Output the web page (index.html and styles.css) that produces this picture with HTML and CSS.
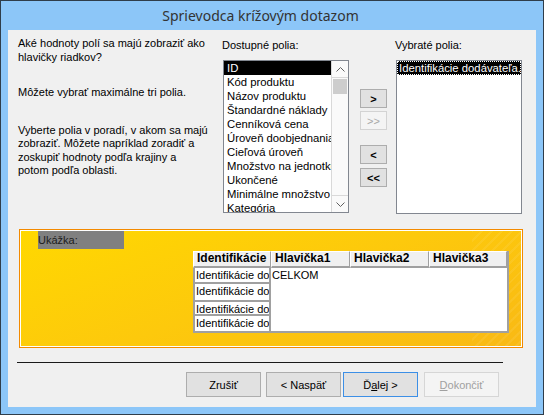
FILE: index.html
```html
<!DOCTYPE html>
<html lang="sk">
<head>
    <meta charset="UTF-8">
    <title>Sprievodca krížovým dotazom</title>
    <link rel="stylesheet" href="styles.css">
</head>
<body>
    <div class="window">
        <div class="titlebar">Sprievodca krížovým dotazom</div>
        <div class="client">
            <div class="top">
                <div class="intro">
                    <p class="q">Aké hodnoty polí sa majú zobraziť ako<br>hlavičky riadkov?</p>
                    <p class="max">Môžete vybrať maximálne tri polia.</p>
                    <p>Vyberte polia v poradí, v akom sa majú<br>zobraziť. Môžete napríklad zoradiť a<br>zoskupiť hodnoty podľa krajiny a<br>potom podľa oblasti.</p>
                </div>

                <div class="field-col">
                    <div class="label">Dostupné polia:</div>
                    <div class="listbox">
                        <ul class="items">
                            <li class="selected">ID</li>
                            <li>Kód produktu</li>
                            <li>Názov produktu</li>
                            <li>Štandardné náklady</li>
                            <li>Cenníková cena</li>
                            <li>Úroveň doobjednania</li>
                            <li>Cieľová úroveň</li>
                            <li>Množstvo na jednotku</li>
                            <li>Ukončené</li>
                            <li>Minimálne množstvo na objednanie</li>
                            <li>Kategória</li>
                        </ul>
                        <div class="scrollbar">
                            <div class="sb-btn sb-up">
                                <svg width="9" height="5" viewBox="0 0 9 5"><polyline points="0.5,4.5 4.5,0.5 8.5,4.5" fill="none" stroke="#606060" stroke-width="1"/></svg>
                            </div>
                            <div class="sb-thumb"></div>
                            <div class="sb-track"></div>
                            <div class="sb-btn sb-down">
                                <svg width="9" height="5" viewBox="0 0 9 5"><polyline points="0.5,0.5 4.5,4.5 8.5,0.5" fill="none" stroke="#606060" stroke-width="1"/></svg>
                            </div>
                        </div>
                    </div>
                </div>

                <div class="move-buttons">
                    <button class="move add-one">&gt;</button>
                    <button class="move add-all" disabled>&gt;&gt;</button>
                    <button class="move remove-one">&lt;</button>
                    <button class="move remove-all">&lt;&lt;</button>
                </div>

                <div class="field-col selected-col">
                    <div class="label">Vybraté polia:</div>
                    <div class="listbox">
                        <ul class="items">
                            <li class="selected focused">Identifikácie dodávateľa.ID</li>
                        </ul>
                    </div>
                </div>
            </div>

            <div class="preview">
                <div class="preview-label">Ukážka:</div>
                <div class="sheet">
                    <div class="head">Identifikácie</div>
                    <div class="head">Hlavička1</div>
                    <div class="head">Hlavička2</div>
                    <div class="head">Hlavička3</div>
                    <div class="row-cell r1">Identifikácie dodávateľa1</div>
                    <div class="values">CELKOM</div>
                    <div class="row-cell r2">Identifikácie dodávateľa1</div>
                    <div class="row-cell r3">Identifikácie dodávateľa2</div>
                    <div class="row-cell r4">Identifikácie dodávateľa2</div>
                </div>
            </div>

            <hr class="separator">

            <div class="actions">
                <button class="btn">Zrušiť</button>
                <button class="btn back">&lt; Naspäť</button>
                <button class="btn next default">Ď<u>a</u>lej &gt;</button>
                <button class="btn finish" disabled><u>D</u>okončiť</button>
            </div>
        </div>
    </div>
</body>
</html>
```

FILE: styles.css
```css
body {
    margin: 0;
    font-family: "Liberation Sans", Arial, sans-serif;
    font-size: 11px;
    color: #000;
}
.window {
    width: 544px;
    height: 415px;
    box-sizing: border-box;
    border: 1px solid #2f3d4a;
    background-color: #8cc6f8;
    display: flex;
    flex-direction: column;
}
.titlebar {
    height: 29px;
    display: flex;
    align-items: center;
    justify-content: center;
    padding-right: 23px;
    font-family: "Noto Sans", "Open Sans", sans-serif;
    font-size: 14px;
    color: #333;
}
.client {
    margin: 0 7px;
    height: 377px;
    background-color: #f0f0f0;
}

/* Upper part: text, field lists, move buttons */
.top {
    display: flex;
    height: 184px;
    box-sizing: border-box;
    padding: 8px 0 0 10px;
}
.intro {
    width: 204px;
    line-height: 13.5px;
    margin-top: -1px;
}
.intro p {
    margin: 0;
}
.intro .q {
    margin-bottom: 22px;
}
.intro .max {
    margin-bottom: 24px;
}
.field-col {
    width: 127px;
}
.label {
    height: 14px;
    line-height: 14px;
    margin-bottom: 8px;
}
.listbox {
    margin-left: 1px;
    width: 126px;
    height: 153px;
    box-sizing: border-box;
    border: 1px solid #828790;
    background-color: #fff;
    display: flex;
    overflow: hidden;
}
.selected-col .listbox {
    height: 154px;
}
.items {
    list-style: none;
    margin: 0;
    padding: 0;
    flex: 1;
    min-width: 0;
}
.items li {
    height: 14px;
    line-height: 14px;
    padding-left: 3px;
    font-size: 11.3px;
    white-space: nowrap;
    overflow: hidden;
}
.items li.selected {
    background-color: #000;
    color: #fff;
}
.items li.focused {
    padding-left: 2px;
    outline: 1px dotted #fff;
    outline-offset: -1px;
}
.scrollbar {
    width: 16px;
    display: flex;
    flex-direction: column;
    border-left: 1px solid #d9d9d9;
    background-color: #fafafa;
}
.sb-btn {
    height: 16px;
    display: flex;
    align-items: center;
    justify-content: center;
}
.sb-up {
    border-bottom: 1px solid #d9d9d9;
}
.sb-down {
    border-top: 1px solid #d9d9d9;
}
.sb-thumb {
    height: 15px;
    margin: 1px 1px 0;
    background-color: #cdcdcd;
}
.sb-track {
    flex: 1;
}

.move-buttons {
    width: 27px;
    margin-left: 11px;
    padding-top: 51px;
}
.move {
    display: block;
    width: 27px;
    height: 19px;
    padding: 0;
    border: 1px solid #adadad;
    background-color: #e1e1e1;
    font-family: "Liberation Sans", Arial, sans-serif;
    font-size: 11px;
    font-weight: bold;
    color: #000;
}
.move.add-all {
    margin-top: 3px;
    border-color: #d3d3d3;
    background-color: #f4f4f4;
    color: #a8a8a8;
    font-weight: normal;
}
.move.remove-one {
    margin-top: 15px;
}
.move.remove-all {
    margin-top: 4px;
}
.selected-col {
    margin-left: 8px;
}

/* Preview */
.preview {
    margin: 15px 0 0 11px;
    width: 504px;
    height: 119px;
    box-sizing: border-box;
    padding-top: 1px;
    border: 1px solid #f38a00;
    box-shadow: inset 0 0 0 1px #fff;
    background:
        repeating-linear-gradient(135deg, rgba(255, 255, 255, 0.07) 0 2px, transparent 2px 7px) right top / 50px 100% no-repeat,
        linear-gradient(160deg, #ffd800 0%, #fdc90c 50%, #f9b914 100%);
}
.preview-label {
    margin-left: 18px;
    width: 86px;
    height: 18px;
    line-height: 18px;
    background-color: #808080;
    color: #1c1c1c;
}
.sheet {
    margin: 2px 0 0 173px;
    width: 316px;
    box-sizing: border-box;
    display: grid;
    grid-template-columns: 78px 79px 79px 78px;
    grid-template-rows: 17px 16px 18px 14px 15px;
    border-right: 2px solid #a0a0a0;
    border-bottom: 2px solid #a0a0a0;
    background-color: #fff;
}
.head {
    box-sizing: border-box;
    padding-left: 3px;
    border-top: 1px solid #fff;
    border-left: 1px solid #fff;
    border-right: 1px solid #a0a0a0;
    border-bottom: 2px solid #a0a0a0;
    background-color: #f0f0f0;
    font-size: 12px;
    font-weight: bold;
    line-height: 13px;
    white-space: nowrap;
    overflow: hidden;
}
.row-cell {
    grid-column: 1;
    box-sizing: border-box;
    padding-left: 1px;
    border-left: 2px solid #a0a0a0;
    border-right: 2px solid #a0a0a0;
    border-bottom: 2px solid #a0a0a0;
    line-height: 14px;
    white-space: nowrap;
    overflow: hidden;
}
.row-cell.r4 {
    border-bottom: 0;
}
.values {
    grid-column: 2 / 5;
    grid-row: 2 / 6;
    padding-left: 1px;
    line-height: 14px;
}

.separator {
    margin: 14px 0 0 9px;
    width: 486px;
    height: 1px;
    border: 0;
    background-color: #1a1a1a;
}

/* Wizard buttons */
.actions {
    display: flex;
    margin-top: 9px;
    padding-left: 178px;
}
.btn {
    width: 75px;
    height: 25px;
    padding: 0;
    border: 1px solid #adadad;
    background-color: #e1e1e1;
    font-family: "Liberation Sans", Arial, sans-serif;
    font-size: 11px;
    color: #000;
}
.btn.back {
    margin-left: 5px;
}
.btn.next {
    margin-left: 2px;
}
.btn.default {
    border-color: #3c8fe6;
}
.btn.finish {
    margin-left: 6px;
    border-color: #d6d6d6;
    background-color: #f4f4f4;
    color: #a0a0a0;
}
```
